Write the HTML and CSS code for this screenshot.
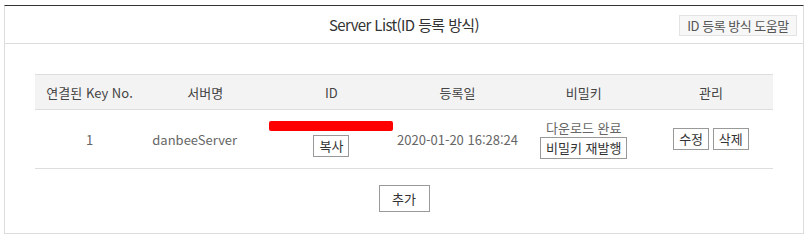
FILE: index.html
```html
<!DOCTYPE html>
<html lang="ko">
<head>
    <meta charset="UTF-8">
    <meta name="viewport" content="width=device-width, initial-scale=1.0">
    <title>Server List</title>
    <link rel="stylesheet" href="styles.css">
</head>
<body>
    <div class="panel">
        <div class="panel-head">
            <h3>Server List(ID 등록 방식)</h3>
            <button class="help-btn">ID 등록 방식 도움말</button>
        </div>
        <div class="panel-body">
            <table class="server-table">
                <colgroup>
                    <col style="width:109px">
                    <col style="width:122px">
                    <col style="width:130px">
                    <col style="width:122px">
                    <col style="width:130px">
                    <col style="width:124px">
                </colgroup>
                <thead>
                    <tr>
                        <th>연결된 Key No.</th>
                        <th>서버명</th>
                        <th>ID</th>
                        <th>등록일</th>
                        <th>비밀키</th>
                        <th>관리</th>
                    </tr>
                </thead>
                <tbody>
                    <tr>
                        <td>1</td>
                        <td class="name">danbeeServer</td>
                        <td>
                            <div class="masked"></div>
                            <button class="btn">복사</button>
                        </td>
                        <td>2020-01-20 16:28:24</td>
                        <td>
                            <div class="status">다운로드 완료</div>
                            <button class="btn">비밀키 재발행</button>
                        </td>
                        <td>
                            <button class="btn">수정</button>
                            <button class="btn">삭제</button>
                        </td>
                    </tr>
                </tbody>
            </table>
            <div class="actions">
                <button class="btn add-btn">추가</button>
            </div>
        </div>
    </div>
</body>
</html>
```

FILE: styles.css
```css
body {
    margin: 5px 5px 0 4px;
    font-family: "Noto Sans CJK KR", "Noto Sans", sans-serif;
    color: #555;
    background: #fff;
}
.panel {
    border: 1px solid #ddd;
    border-top: 1px solid #333;
    height: 227px;
}
.panel-head {
    position: relative;
    height: 37px;
    border-bottom: 1px solid #ddd;
    display: flex;
    align-items: center;
    justify-content: center;
}
.panel-head h3 {
    margin: 0;
    font-weight: normal;
    font-size: 15px;
    color: #333;
    letter-spacing: -0.6px;
}
.help-btn {
    position: absolute;
    right: 6px;
    top: 9px;
    height: 21px;
    width: 118px;
    padding: 0;
    border: 1px solid #e3e3e3;
    background: #f7f7f7;
    font-family: "Noto Sans CJK KR", sans-serif;
    font-size: 13px;
    color: #555;
    letter-spacing: -0.5px;
}
.panel-body {
    padding: 30px 30px 0 30px;
}
.server-table {
    width: 738px;
    border-collapse: collapse;
    table-layout: fixed;
    font-size: 13px;
}
.server-table th {
    height: 34px;
    background: #f3f3f3;
    border-top: 1px solid #ddd;
    border-bottom: 1px solid #ddd;
    font-weight: normal;
    color: #444;
    padding: 0;
}
.server-table td {
    height: 58px;
    border-bottom: 1px solid #ddd;
    text-align: center;
    padding: 0;
    color: #666;
    white-space: nowrap;
}
.server-table td.name {
    padding-right: 21px;
}
.masked {
    width: 124px;
    height: 10px;
    margin: 0 auto 4px;
    background: #f00;
    border-radius: 2px;
}
.status {
    line-height: 17px;
    margin-bottom: 1px;
}
.btn {
    font-family: "Noto Sans CJK KR", sans-serif;
    font-size: 13px;
    color: #333;
    background: #fff;
    border: 1px solid #999;
    height: 22px;
    padding: 0 5px;
    line-height: 18px;
    margin: 0;
    vertical-align: middle;
}
.actions {
    margin-top: 15px;
    text-align: center;
}
.add-btn {
    height: 27px;
    width: 51px;
}
```
